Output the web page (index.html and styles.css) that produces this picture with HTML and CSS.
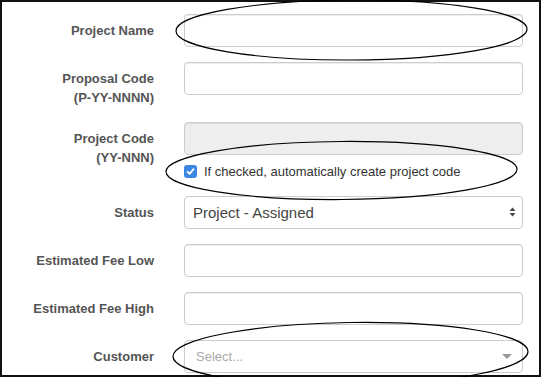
FILE: index.html
```html
<!DOCTYPE html>
<html lang="en">
<head>
    <meta charset="UTF-8">
    <meta name="viewport" content="width=device-width, initial-scale=1.0">
    <title>Project details</title>
    <link rel="stylesheet" href="styles.css">
</head>
<body>
    <div class="frame">
        <form class="project-form">
            <div class="form-row">
                <label class="form-label">Project Name</label>
                <div class="form-control">
                    <input class="field" type="text">
                </div>
            </div>

            <div class="form-row">
                <label class="form-label">Proposal Code<br>(P-YY-NNNN)</label>
                <div class="form-control">
                    <input class="field" type="text">
                </div>
            </div>

            <div class="form-row">
                <label class="form-label">Project Code<br>(YY-NNN)</label>
                <div class="form-control">
                    <input class="field" type="text" disabled>
                    <label class="check">
                        <span class="check-box">
                            <svg viewBox="0 0 13 13" fill="none" stroke="#fff" stroke-width="1.8" stroke-linecap="round" stroke-linejoin="round">
                                <polyline points="3.5 6.8 5.6 8.8 9.5 4.2"></polyline>
                            </svg>
                        </span>
                        If checked, automatically create project code
                    </label>
                </div>
            </div>

            <div class="form-row">
                <label class="form-label">Status</label>
                <div class="form-control">
                    <div class="select-wrap">
                        <select class="field select">
                            <option>Project - Assigned</option>
                        </select>
                        <svg class="updown" viewBox="0 0 7 10" fill="#444">
                            <polygon points="3.5 0.5 6.5 4 0.5 4"></polygon>
                            <polygon points="0.5 6 6.5 6 3.5 9.5"></polygon>
                        </svg>
                    </div>
                </div>
            </div>

            <div class="form-row">
                <label class="form-label">Estimated Fee Low</label>
                <div class="form-control">
                    <input class="field" type="text">
                </div>
            </div>

            <div class="form-row">
                <label class="form-label">Estimated Fee High</label>
                <div class="form-control">
                    <input class="field" type="text">
                </div>
            </div>

            <div class="form-row">
                <label class="form-label">Customer</label>
                <div class="form-control">
                    <div class="field picker">
                        <span class="placeholder">Select...</span>
                        <span class="caret"></span>
                    </div>
                </div>
            </div>
        </form>

        <!-- hand drawn annotation rings -->
        <svg class="marks" viewBox="0 0 542 388" fill="none" stroke="#000" stroke-width="1.2">
            <ellipse cx="351.5" cy="30" rx="175.5" ry="30" transform="rotate(-0.3 351.5 30)"></ellipse>
            <ellipse cx="341.5" cy="170.5" rx="175.5" ry="29" transform="rotate(-0.4 341.5 170.5)"></ellipse>
            <ellipse cx="350.5" cy="354" rx="177.5" ry="31.5" transform="rotate(-0.8 350.5 354)"></ellipse>
        </svg>
    </div>
</body>
</html>
```

FILE: styles.css
```css
* {
    box-sizing: border-box;
}

body {
    margin: 0;
    background: #fff;
    font-family: 'Liberation Sans', Arial, Helvetica, sans-serif;
    color: #333;
}

.frame {
    position: relative;
    width: 541px;
    border: 2px solid #111;
    padding: 12px 0 2px 0;
}

.project-form {
    display: flex;
    flex-direction: column;
    gap: 15px;
}

.form-row {
    display: grid;
    grid-template-columns: 152px 339px;
    column-gap: 30px;
    align-items: start;
}

.form-label {
    text-align: right;
    font-size: 13px;
    font-weight: 700;
    line-height: 19px;
    color: #555;
    padding-top: 7px;
}

.form-control {
    display: flex;
    flex-direction: column;
}

.field {
    display: block;
    width: 100%;
    height: 33px;
    margin: 0;
    padding: 0 8px;
    border: 1px solid #ccc;
    border-radius: 4px;
    background: #fff;
    box-shadow: inset 0 1px 1px rgba(0, 0, 0, 0.075);
    font-family: inherit;
    font-size: 14px;
    color: #555;
    outline: none;
}

.field:disabled {
    background: #eee;
}

.check {
    display: flex;
    align-items: center;
    gap: 7px;
    margin-top: 7px;
    font-size: 13px;
    line-height: 19px;
    color: #333;
}

.check-box {
    width: 13px;
    height: 13px;
    border-radius: 3px;
    background: #3b86e3;
    display: flex;
}

.check-box svg {
    width: 13px;
    height: 13px;
}

.select-wrap {
    position: relative;
}

.select {
    appearance: none;
    -webkit-appearance: none;
    font-size: 15px;
    color: #444;
    box-shadow: none;
    padding-left: 8px;
}

.updown {
    position: absolute;
    right: 7px;
    top: 11px;
    width: 7px;
    height: 10px;
    pointer-events: none;
}

.picker {
    display: flex;
    align-items: center;
    justify-content: space-between;
    padding: 0 10px 0 11px;
    box-shadow: none;
}

.placeholder {
    font-size: 13px;
    color: #aaa;
}

.caret {
    width: 0;
    height: 0;
    border-top: 5px solid #999;
    border-left: 5px solid transparent;
    border-right: 5px solid transparent;
}

.marks {
    position: absolute;
    left: -2px;
    top: -2px;
    width: 542px;
    height: 388px;
    pointer-events: none;
    overflow: visible;
}
```
